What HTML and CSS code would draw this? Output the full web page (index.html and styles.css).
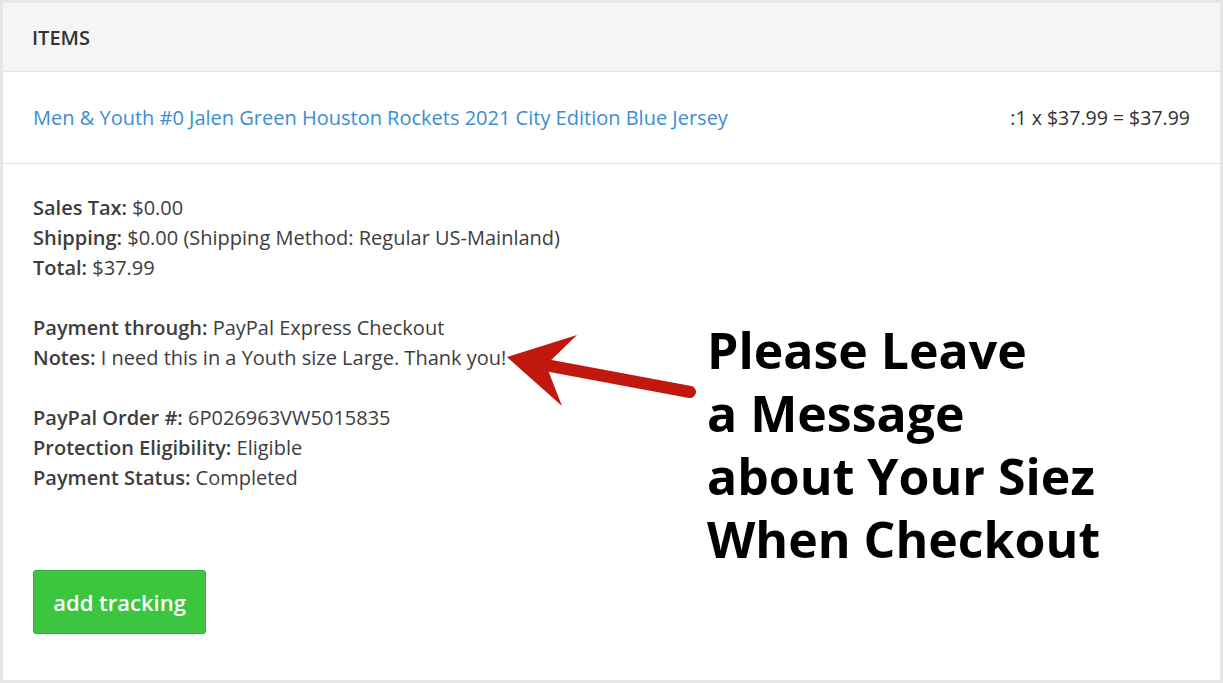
FILE: index.html
```html
<!DOCTYPE html>
<html lang="en">
<head>
    <meta charset="UTF-8">
    <title>Order Items</title>
    <link rel="stylesheet" href="styles.css">
</head>
<body>
    <div class="card">
        <div class="card-header">ITEMS</div>

        <div class="item-row">
            <a class="item-name" href="#">Men &amp; Youth #0 Jalen Green Houston Rockets 2021 City Edition Blue Jersey</a>
            <span class="item-price">:1 x $37.99 = $37.99</span>
        </div>

        <div class="details">
            <div class="group">
                <div><b>Sales Tax:</b> $0.00</div>
                <div><b>Shipping:</b> $0.00 (Shipping Method: Regular US-Mainland)</div>
                <div><b>Total:</b> $37.99</div>
            </div>
            <div class="group">
                <div><b>Payment through:</b> PayPal Express Checkout</div>
                <div><b>Notes:</b> I need this in a Youth size Large. Thank you!</div>
            </div>
            <div class="group">
                <div><b>PayPal Order #:</b> 6P026963VW5015835</div>
                <div><b>Protection Eligibility:</b> Eligible</div>
                <div><b>Payment Status:</b> Completed</div>
            </div>

            <button class="track-btn">add tracking</button>
        </div>

        <svg class="arrow" width="200" height="90" viewBox="0 0 200 90">
            <path d="M40 44 L190 72" stroke="#c0170f" stroke-width="12" stroke-linecap="round"/>
            <polygon points="7,37 77,15 46,45 62,86" fill="#c0170f"/>
        </svg>

        <div class="note">Please Leave<br>a Message<br>about Your Siez<br>When Checkout</div>
    </div>
</body>
</html>
```

FILE: styles.css
```css
body {
    margin: 0;
    padding: 3px;
    background-color: #e6e6e6;
    font-family: "Open Sans", sans-serif;
    color: #3d3d3d;
}
.card {
    position: relative;
    background-color: #fff;
    height: 677px;
    width: 1217px;
    box-sizing: border-box;
}
.card-header {
    background-color: #f5f5f5;
    border-bottom: 1px solid #e3e3e3;
    height: 69px;
    box-sizing: border-box;
    padding-left: 29px;
    display: flex;
    align-items: center;
    font-size: 20px;
    font-weight: 600;
    color: #333;
}
.item-row {
    display: flex;
    justify-content: space-between;
    align-items: center;
    height: 92px;
    box-sizing: border-box;
    padding: 0 30px;
    border-bottom: 1px solid #e3e3e3;
    font-size: 20px;
}
.item-name {
    color: #3b8dd4;
    text-decoration: none;
}
.item-price {
    color: #333;
    font-size: 19.5px;
}
.details {
    padding: 29px 30px 0 30px;
    font-size: 20px;
    line-height: 30px;
}
.details b {
    font-weight: 600;
}
.group {
    margin-bottom: 30px;
}
.track-btn {
    margin-top: 47px;
    width: 173px;
    height: 64px;
    background-color: #3cc63f;
    border: 1px solid #2fae33;
    border-radius: 3px;
    color: #fff;
    font-family: "Open Sans", sans-serif;
    font-size: 22px;
    font-weight: 600;
    cursor: pointer;
}
.arrow {
    position: absolute;
    left: 497px;
    top: 317px;
}
.note {
    position: absolute;
    left: 704px;
    top: 316px;
    font-family: "Open Sans", sans-serif;
    font-size: 50px;
    font-weight: bold;
    line-height: 63px;
    color: #000;
}
```
